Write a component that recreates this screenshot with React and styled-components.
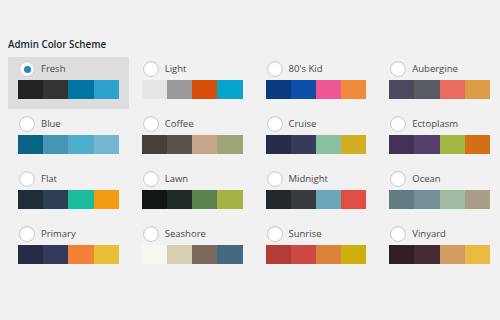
import React from 'react';
import styled, { createGlobalStyle } from 'styled-components';

const GlobalStyle = createGlobalStyle`
  html, body {
    margin: 0;
    padding: 0;
    background: #f1f1f1;
  }
  body {
    font-family: "Open Sans", "Liberation Sans", sans-serif;
    color: #444;
  }
`;

const Section = styled.div`
  width: 492px;
  height: 320px;
  padding: 0 0 0 8px;
  background: #f1f1f1;
`;

const Title = styled.h3`
  margin: 0;
  padding-top: 38px;
  height: 19px;
  font-size: 9.8px;
  line-height: 14px;
  font-weight: 600;
  color: #23282d;
`;

const Grid = styled.div`
  display: grid;
  grid-template-columns: repeat(4, 1fr);
  gap: 3px;
`;

const Option = styled.div`
  padding: 4px 10px 10px;
  background: ${p => (p.selected ? '#dddddd' : 'transparent')};
`;

const Head = styled.label`
  display: flex;
  align-items: center;
  gap: 6px;
  height: 16px;
  margin-left: 1px;
`;

const Radio = styled.span`
  box-sizing: border-box;
  width: 16px;
  height: 16px;
  border-radius: 50%;
  border: 1px solid #c9cdd1;
  background: #fff;
  box-shadow: inset 0 1px 2px rgba(0, 0, 0, 0.08);
  display: flex;
  align-items: center;
  justify-content: center;

  &::before {
    content: '';
    display: ${p => (p.checked ? 'block' : 'none')};
    width: 7px;
    height: 7px;
    border-radius: 50%;
    background: #1e8cbe;
  }
`;

const Label = styled.span`
  font-size: 9.5px;
  line-height: 14px;
  color: #484848;
`;

const Palette = styled.div`
  display: flex;
  margin-top: 3px;
  height: 19px;
`;

const Swatch = styled.span`
  flex: 1;
  background: ${p => p.color};
`;

const schemes = [
  { name: 'Fresh', colors: ['#222222', '#333333', '#0074a2', '#2ea2cc'] },
  { name: 'Light', colors: ['#e5e5e5', '#999999', '#d64e07', '#04a4cc'] },
  { name: "80's Kid", colors: ['#0a3a80', '#0d4fa8', '#ed5793', '#ee8a3a'] },
  { name: 'Aubergine', colors: ['#4b485e', '#595b62', '#ea6c5f', '#de9b46'] },
  { name: 'Blue', colors: ['#096484', '#4796b3', '#52accc', '#74b6ce'] },
  { name: 'Coffee', colors: ['#46403c', '#59524c', '#c7a589', '#9ea476'] },
  { name: 'Cruise', colors: ['#292c48', '#373a5b', '#8bbfa1', '#d3ae24'] },
  { name: 'Ectoplasm', colors: ['#413256', '#523f6d', '#a3b745', '#d46f15'] },
  { name: 'Flat', colors: ['#1f2c39', '#2c3e50', '#1abc9c', '#f39c12'] },
  { name: 'Lawn', colors: ['#111615', '#1f2a28', '#5b834d', '#a6b146'] },
  { name: 'Midnight', colors: ['#25282b', '#363b3f', '#69a8bb', '#e14d43'] },
  { name: 'Ocean', colors: ['#627c83', '#738e96', '#9ebaa0', '#aa9d88'] },
  { name: 'Primary', colors: ['#282b48', '#35395c', '#f38135', '#e7c03a'] },
  { name: 'Seashore', colors: ['#f8f6f1', '#d6cfb1', '#7b6a5b', '#456a7f'] },
  { name: 'Sunrise', colors: ['#b43c38', '#cf4944', '#dd823b', '#ccaf0b'] },
  { name: 'Vinyard', colors: ['#301d25', '#462b35', '#d29b60', '#ecba41'] },
];

export default function App() {
  return (
    <Section>
      <GlobalStyle />
      <Title>Admin Color Scheme</Title>
      <Grid>
        {schemes.map((s, i) => (
          <Option key={s.name} selected={i === 0}>
            <Head>
              <Radio checked={i === 0} />
              <Label>{s.name}</Label>
            </Head>
            <Palette>
              {s.colors.map((c, j) => (
                <Swatch key={j} color={c} />
              ))}
            </Palette>
          </Option>
        ))}
      </Grid>
    </Section>
  );
}
